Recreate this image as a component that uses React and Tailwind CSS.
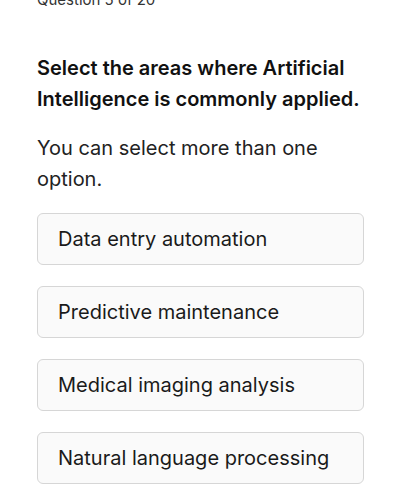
export default function App() {
  const options = [
    "Data entry automation",
    "Predictive maintenance",
    "Medical imaging analysis",
    "Natural language processing",
  ];
  return (
    <div className="w-[401px] h-[500px] overflow-hidden bg-white text-[#1a1a1a]" style={{ fontFamily: "Inter, 'Noto Sans', sans-serif" }}>
      <div className="px-[37px] -mt-[11px]">
        <div className="text-[15px] leading-[22px] text-[#333]">Question 5 of 20</div>
        <h1 className="mt-[42px] text-[20px] leading-[31px] font-semibold text-[#111]">
          Select the areas where Artificial Intelligence is commonly applied.
        </h1>
        <p className="mt-[18px] text-[20px] leading-[31px] text-[#222]">
          You can select more than one option.
        </p>
        <div className="mt-[18px] flex flex-col gap-[21px]">
          {options.map((o) => (
            <div
              key={o}
              className="w-[327px] h-[52px] flex items-center pl-[20px] rounded-[6px] border border-[#d6d6d6] bg-[#fafafa] text-[20px] text-[#1a1a1a]"
            >
              {o}
            </div>
          ))}
        </div>
      </div>
    </div>
  );
}
